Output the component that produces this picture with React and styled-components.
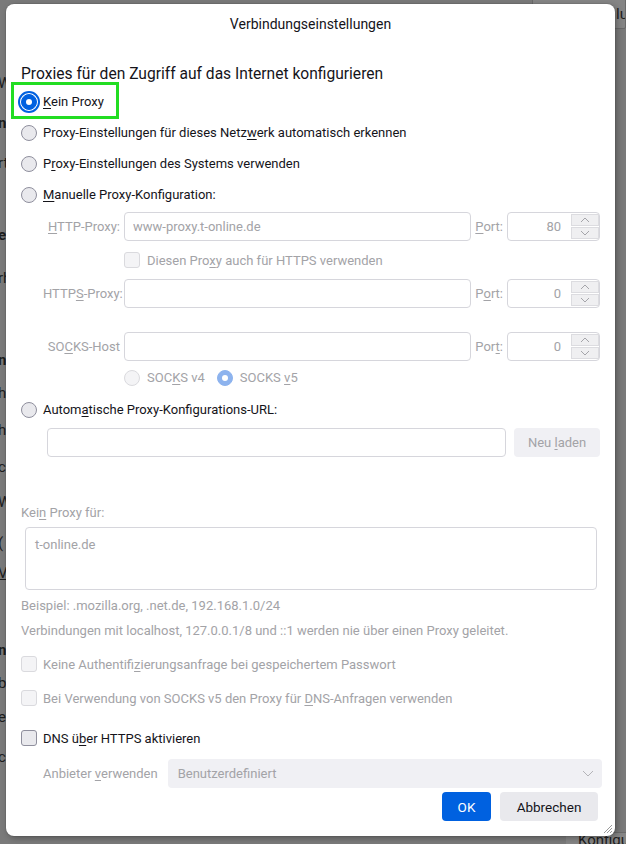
import React from 'react';
import styled, { createGlobalStyle, css } from 'styled-components';

const FONT = `Roboto, "Segoe UI", "Noto Sans", sans-serif`;
const TEXT = '#15141a';
const MUTED = '#a3a3a7';
const ACCENT = '#0061e0';
const FIELD_BORDER = '#d6d6dc';

const GlobalStyle = createGlobalStyle`
  html, body { margin: 0; padding: 0; }
  body { width: 626px; height: 844px; overflow: hidden; background: #7a7a7a; font-family: ${FONT}; }
  *, *::before, *::after { box-sizing: border-box; }
`;

/* ---------- dimmed page behind the dialog ---------- */
const Screen = styled.div`
  position: relative;
  width: 626px;
  height: 844px;
  overflow: hidden;
  background: #7a7a7a;
  display: flex;
`;
const BgLeft = styled.div`
  width: 40px;
  display: flex;
  flex-direction: column;
  font: 15px ${FONT};
  color: #1d1d1d;
`;
const BgLine = styled.div`
  height: 20px;
  line-height: 20px;
  margin-top: ${(p) => p.$mt}px;
  margin-left: -2px;
  white-space: nowrap;
  font-weight: ${(p) => (p.$bold ? 700 : 400)};
  text-decoration: ${(p) => (p.$u ? 'underline' : 'none')};
`;
const BgRight = styled.div`
  flex: 1;
  display: flex;
  flex-direction: column;
  align-items: flex-end;
  justify-content: space-between;
`;
const BgTopBox = styled.div`
  width: 94px;
  height: 31px;
  margin-top: -2px;
  background: #858585;
  border: 1px solid #6a6a6a;
  border-radius: 2px;
  font: 15px ${FONT};
  color: #1d1d1d;
  display: flex;
  align-items: center;
  padding-left: 83px;
  overflow: hidden;
  white-space: nowrap;
`;
const BgBottomBox = styled.div`
  width: 60px;
  height: 14px;
  margin-bottom: -2px;
  background: #858585;
  border-top: 1px solid #6a6a6a;
  font: 15px ${FONT};
  color: #1d1d1d;
  padding-left: 12px;
  line-height: 14px;
  white-space: nowrap;
  overflow: hidden;
`;

/* ---------- dialog ---------- */
const Dialog = styled.div`
  position: absolute;
  left: 6px;
  top: 4px;
  width: 609px;
  height: 832px;
  background: #fff;
  border-radius: 8px;
  box-shadow: 0 0 0 1px rgba(0, 0, 0, 0.06), 2px 2px 6px rgba(0, 0, 0, 0.3);
  display: flex;
  flex-direction: column;
  font-family: ${FONT};
  font-size: 13px;
  color: ${TEXT};
`;
const Title = styled.div`
  height: 40px;
  display: flex;
  align-items: center;
  justify-content: center;
  font-size: 14px;
`;
const Body = styled.div`
  flex: 1;
  display: flex;
  flex-direction: column;
  padding: 0 15px;
`;
const Heading = styled.div`
  margin-top: 19px;
  height: 22px;
  line-height: 22px;
  font-size: 15.6px;
`;
const Options = styled.div`
  margin-top: 1px;
  display: flex;
  flex-direction: column;
`;
const Key = styled.span`
  text-decoration: underline;
  text-underline-offset: 2px;
  text-decoration-thickness: 1px;
`;
const OptionRow = styled.div`
  position: relative;
  height: 31px;
  display: flex;
  align-items: center;
  gap: 6px;
  color: ${(p) => (p.$disabled ? MUTED : TEXT)};
  ${(p) =>
    p.$highlight &&
    css`
      &::before {
        content: '';
        position: absolute;
        left: -10px;
        top: -4px;
        width: 108px;
        height: 37px;
        border: 3px solid #22dd22;
        pointer-events: none;
      }
    `}
`;
const Radio = styled.span`
  position: relative;
  flex: none;
  width: 16px;
  height: 16px;
  border-radius: 50%;
  border: 1px solid ${(p) => (p.$disabled ? '#dadade' : '#8f8f9d')};
  background: ${(p) => (p.$disabled ? '#f4f4f6' : '#e9e9ed')};
  ${(p) =>
    p.$checked &&
    css`
      border-color: ${p.$disabled ? '#8db3ee' : ACCENT};
      background: ${p.$disabled ? '#8db3ee' : ACCENT};
      &::after {
        content: '';
        position: absolute;
        left: 50%;
        top: 50%;
        width: 6px;
        height: 6px;
        margin: -3px 0 0 -3px;
        border-radius: 50%;
        background: #fff;
      }
    `}
  ${(p) =>
    p.$focus &&
    css`
      outline: 2px solid ${ACCENT};
      outline-offset: 1px;
    `}
`;
const Checkbox = styled.span`
  flex: none;
  width: 16px;
  height: 16px;
  border-radius: 3px;
  border: 1px solid ${(p) => (p.$disabled ? '#dadade' : '#8f8f9d')};
  background: ${(p) => (p.$disabled ? '#f4f4f6' : '#e9e9ed')};
`;

const ManualGrid = styled.div`
  margin-top: 2px;
  margin-left: 22px;
  display: grid;
  grid-template-columns: 77px 1fr auto 93px;
  column-gap: 4px;
  align-items: center;
`;
const FieldLabel = styled.span`
  color: ${MUTED};
  text-align: right;
  white-space: nowrap;
`;
const TextField = styled.input`
  flex: 1;
  height: 29px;
  width: 100%;
  min-width: 0;
  border: 1px solid ${FIELD_BORDER};
  border-radius: 4px;
  padding: 0 8px;
  font-family: ${FONT};
  font-size: 13px;
  color: ${MUTED};
  background: #fff;
  outline: none;
`;
const PortBox = styled.div`
  height: 29px;
  border: 1px solid ${FIELD_BORDER};
  border-radius: 4px;
  display: flex;
  align-items: stretch;
  padding: 1px 0 1px 0;
`;
const PortValue = styled.span`
  flex: 1;
  display: flex;
  align-items: center;
  justify-content: flex-end;
  padding-right: 10px;
  color: ${MUTED};
`;
const Spinner = styled.div`
  width: 28px;
  display: flex;
  flex-direction: column;
  gap: 1px;
`;
const SpinButton = styled.span`
  flex: 1;
  background: #efeff1;
  border: 1px solid #dcdce0;
  display: flex;
  align-items: center;
  justify-content: center;
`;
const WideCell = styled.div`
  grid-column: 2 / -1;
  height: ${(p) => p.$h}px;
  display: flex;
  align-items: center;
  gap: 7px;
  color: ${MUTED};
`;
const RadioPair = styled.span`
  display: flex;
  align-items: center;
  gap: 7px;
  margin-right: 5px;
`;
const Spacer = styled.div`
  grid-column: 1 / -1;
  height: ${(p) => p.$h}px;
`;

const UrlRow = styled.div`
  margin-top: 3px;
  margin-left: 26px;
  display: flex;
  gap: 8px;
`;
const GhostButton = styled.span`
  flex: none;
  width: 86px;
  height: 29px;
  border-radius: 4px;
  background: #f0f0f4;
  color: ${MUTED};
  display: flex;
  align-items: center;
  justify-content: center;
`;
const MutedLine = styled.div`
  margin-top: ${(p) => p.$mt}px;
  height: 20px;
  line-height: 20px;
  color: ${MUTED};
  white-space: nowrap;
`;
const TextArea = styled.textarea`
  margin: 4px 3px 0 4px;
  height: 63px;
  border: 1px solid ${FIELD_BORDER};
  border-radius: 4px;
  padding: 9px 9px;
  resize: none;
  font-family: ${FONT};
  font-size: 13px;
  color: ${MUTED};
  background: #fff;
  outline: none;
`;
const CheckRow = styled.div`
  margin-top: ${(p) => p.$mt || 0}px;
  height: 34px;
  display: flex;
  align-items: center;
  gap: 6px;
  color: ${(p) => (p.$disabled ? MUTED : TEXT)};
`;
const SelectRow = styled.div`
  margin-top: 4px;
  margin-left: 22px;
  margin-right: -2px;
  display: flex;
  align-items: center;
  gap: 10px;
  color: ${MUTED};
`;
const SelectBox = styled.div`
  flex: 1;
  height: 29px;
  border-radius: 4px;
  background: #f0f0f4;
  display: flex;
  align-items: center;
  justify-content: space-between;
  padding: 0 8px 0 10px;
  color: ${MUTED};
`;
const ButtonRow = styled.div`
  margin-top: 4px;
  padding-right: 2px;
  display: flex;
  justify-content: flex-end;
  gap: 9px;
`;
const DialogButton = styled.button`
  height: 29px;
  width: ${(p) => p.$w}px;
  border: none;
  border-radius: 4px;
  font-family: ${FONT};
  font-size: 13.5px;
  background: ${(p) => (p.$primary ? ACCENT : '#e9e9ed')};
  color: ${(p) => (p.$primary ? '#fff' : TEXT)};
  padding: 0;
`;
const Grip = styled.svg`
  position: absolute;
  right: 2px;
  bottom: 2px;
`;

const Chevron = ({ up }) => (
  <svg width="10" height="6" viewBox="0 0 10 6">
    <polyline
      points={up ? '1,5 5,1 9,5' : '1,1 5,5 9,1'}
      fill="none"
      stroke="#a5a5aa"
      strokeWidth="1"
    />
  </svg>
);

const PortField = ({ value }) => (
  <PortBox>
    <PortValue>{value}</PortValue>
    <Spinner>
      <SpinButton>
        <Chevron up />
      </SpinButton>
      <SpinButton>
        <Chevron />
      </SpinButton>
    </Spinner>
  </PortBox>
);

const bgLines = [
  { mt: 73, t: 'Wa' },
  { mt: 20, t: 'nc', bold: true },
  { mt: 20, t: 'rt' },
  { mt: 52, t: 'e', bold: true },
  { mt: 23, t: 'rh' },
  { mt: 62, t: 'nc', bold: true },
  { mt: 13, t: 'h' },
  { mt: 17, t: 'h' },
  { mt: 17, t: 'c' },
  { mt: 15, t: 'W' },
  { mt: 21, t: '(' },
  { mt: 10, t: 'V', u: true },
  { mt: 57, t: 'n', bold: true },
  { mt: 13, t: 'b' },
  { mt: 14, t: 'er' },
  { mt: 20, t: 'c' },
];

export default function App() {
  return (
    <>
      <GlobalStyle />
      <Screen>
        <BgLeft>
          {bgLines.map((l, i) => (
            <BgLine key={i} $mt={l.mt} $bold={l.bold} $u={l.u}>
              {l.t}
            </BgLine>
          ))}
        </BgLeft>
        <BgRight>
          <BgTopBox>lu</BgTopBox>
          <BgBottomBox>
            <Key>K</Key>onfigu
          </BgBottomBox>
        </BgRight>

        <Dialog>
          <Title>Verbindungseinstellungen</Title>
          <Body>
            <Heading>Proxies für den Zugriff auf das Internet konfigurieren</Heading>

            <Options>
              <OptionRow $highlight>
                <Radio $checked $focus />
                <span>
                  <Key>K</Key>ein Proxy
                </span>
              </OptionRow>
              <OptionRow>
                <Radio />
                <span>
                  Proxy-Einstellungen für dieses Netz<Key>w</Key>erk automatisch erkennen
                </span>
              </OptionRow>
              <OptionRow>
                <Radio />
                <span>
                  P<Key>r</Key>oxy-Einstellungen des Systems verwenden
                </span>
              </OptionRow>
              <OptionRow>
                <Radio />
                <span>
                  <Key>M</Key>anuelle Proxy-Konfiguration:
                </span>
              </OptionRow>
            </Options>

            <ManualGrid>
              <FieldLabel>
                <Key>H</Key>TTP-Proxy:
              </FieldLabel>
              <TextField readOnly value="www-proxy.t-online.de" />
              <FieldLabel>
                <Key>P</Key>ort:
              </FieldLabel>
              <PortField value="80" />

              <WideCell $h={38}>
                <Checkbox $disabled />
                <span>
                  Diesen Pro<Key>x</Key>y auch für HTTPS verwenden
                </span>
              </WideCell>

              <FieldLabel>
                HTTP<Key>S</Key>-Proxy:
              </FieldLabel>
              <TextField readOnly value="" />
              <FieldLabel>
                P<Key>o</Key>rt:
              </FieldLabel>
              <PortField value="0" />

              <Spacer $h={24} />

              <FieldLabel>
                SO<Key>C</Key>KS-Host
              </FieldLabel>
              <TextField readOnly value="" />
              <FieldLabel>
                Por<Key>t</Key>:
              </FieldLabel>
              <PortField value="0" />

              <WideCell $h={33}>
                <RadioPair>
                  <Radio $disabled />
                  <span>
                    SOC<Key>K</Key>S v4
                  </span>
                </RadioPair>
                <RadioPair>
                  <Radio $disabled $checked />
                  <span>
                    SOCKS <Key>v</Key>5
                  </span>
                </RadioPair>
              </WideCell>
            </ManualGrid>

            <OptionRow>
              <Radio />
              <span>
                Autom<Key>a</Key>tische Proxy-Konfigurations-URL:
              </span>
            </OptionRow>
            <UrlRow>
              <TextField readOnly value="" />
              <GhostButton>
                Neu&nbsp;<Key>l</Key>aden
              </GhostButton>
            </UrlRow>

            <MutedLine $mt={46}>
              Kei<Key>n</Key> Proxy für:
            </MutedLine>
            <TextArea readOnly value="t-online.de" />
            <MutedLine $mt={6}>Beispiel: .mozilla.org, .net.de, 192.168.1.0/24</MutedLine>
            <MutedLine $mt={5}>
              Verbindungen mit localhost, 127.0.0.1/8 und ::1 werden nie über einen Proxy geleitet.
            </MutedLine>

            <CheckRow $mt={6} $disabled>
              <Checkbox $disabled />
              <span>
                Keine Authentifi<Key>z</Key>ierungsanfrage bei gespeichertem Passwort
              </span>
            </CheckRow>
            <CheckRow $disabled>
              <Checkbox $disabled />
              <span>
                Bei Verwendung von SOCKS v5 den Proxy für <Key>D</Key>NS-Anfragen verwenden
              </span>
            </CheckRow>
            <CheckRow $mt={6}>
              <Checkbox />
              <span>
                DNS ü<Key>b</Key>er HTTPS aktivieren
              </span>
            </CheckRow>

            <SelectRow>
              <span>
                Anbieter <Key>v</Key>erwenden
              </span>
              <SelectBox>
                <span>Benutzerdefiniert</span>
                <svg width="12" height="7" viewBox="0 0 12 7">
                  <polyline points="1,1 6,6 11,1" fill="none" stroke="#b4b4b8" strokeWidth="1" />
                </svg>
              </SelectBox>
            </SelectRow>

            <ButtonRow>
              <DialogButton $primary $w={49}>
                OK
              </DialogButton>
              <DialogButton $w={98}>Abbrechen</DialogButton>
            </ButtonRow>
          </Body>
          <Grip width="10" height="10" viewBox="0 0 10 10">
            <line x1="9" y1="1" x2="1" y2="9" stroke="#9a9a9a" strokeWidth="1" />
            <line x1="9" y1="4" x2="4" y2="9" stroke="#9a9a9a" strokeWidth="1" />
            <line x1="9" y1="7" x2="7" y2="9" stroke="#9a9a9a" strokeWidth="1" />
          </Grip>
        </Dialog>
      </Screen>
    </>
  );
}
